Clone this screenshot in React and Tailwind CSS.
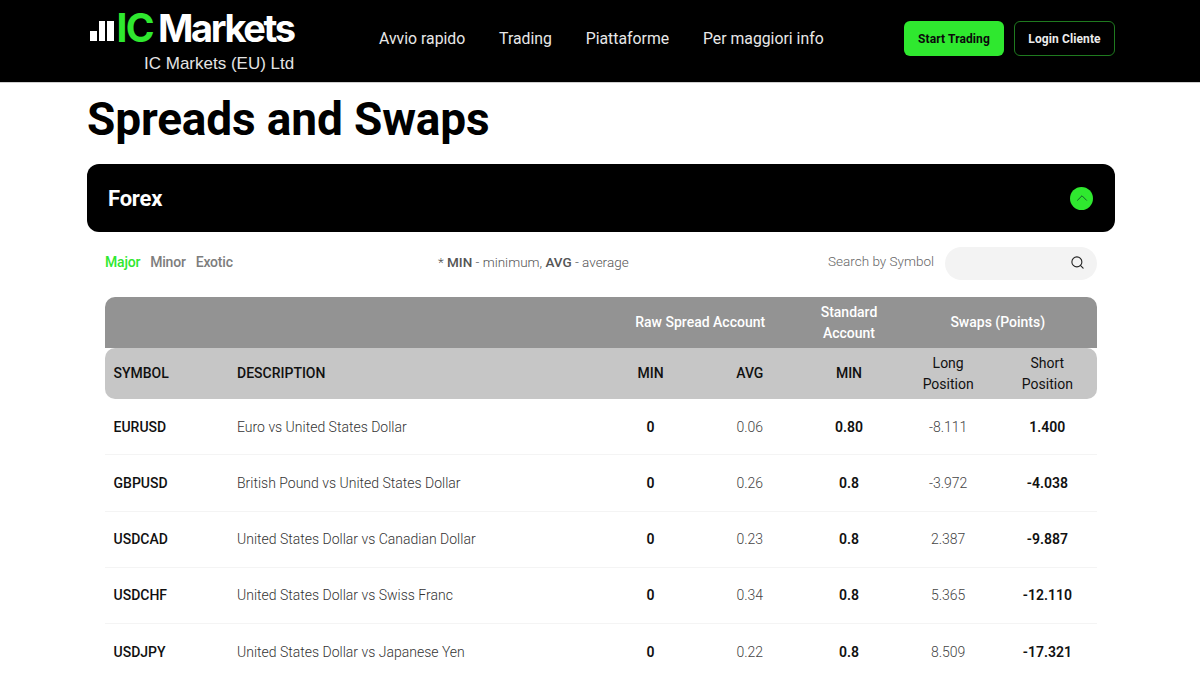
import React from "react";
import { ChevronUp, Search } from "lucide-react";

const navItems = ["Avvio rapido", "Trading", "Piattaforme", "Per maggiori info"];

const rows = [
  ["EURUSD", "Euro vs United States Dollar", "0", "0.06", "0.80", "-8.111", "1.400"],
  ["GBPUSD", "British Pound vs United States Dollar", "0", "0.26", "0.8", "-3.972", "-4.038"],
  ["USDCAD", "United States Dollar vs Canadian Dollar", "0", "0.23", "0.8", "2.387", "-9.887"],
  ["USDCHF", "United States Dollar vs Swiss Franc", "0", "0.34", "0.8", "5.365", "-12.110"],
  ["USDJPY", "United States Dollar vs Japanese Yen", "0", "0.22", "0.8", "8.509", "-17.321"],
];

const gridCols = "grid grid-cols-[132px_364px_repeat(5,99.2px)] items-center";

const Logo = () => (
  <div className="flex flex-col w-[209px] ml-[3px]">
    <div className="flex items-end h-[42px]">
      <div className="flex items-end gap-[2px] mr-[3px] mb-[8px]">
        <span className="w-[6.5px] h-[10px] bg-white" />
        <span className="w-[6.5px] h-[20px] bg-white" />
        <span className="w-[6.5px] h-[20px] bg-white" />
      </div>
      <span className="text-[39px] leading-[42px] font-bold tracking-[-1.6px] text-[#2fe82f] font-['Inter',sans-serif]">IC</span>
      <span className="ml-[5px] text-[38px] leading-[42px] font-bold tracking-[-2.4px] text-white font-['Inter',sans-serif]">Markets</span>
    </div>
    <div className="mt-[4px] pl-[54px] text-[17px] leading-[22px] text-[#e4e4e4] font-['Liberation_Sans',sans-serif]">
      IC Markets (EU) Ltd
    </div>
  </div>
);

const Header = () => (
  <header className="h-[83px] pt-[7px] bg-black border-b border-[#cfcfcf]">
    <div className="ml-[87px] w-[1028px] flex items-start">
      <Logo />
      <nav className="ml-[80px] mt-[20px] flex gap-[33.8px] text-[15.8px] text-[#e8e8e8]">
        {navItems.map((item) => (
          <span key={item}>{item}</span>
        ))}
      </nav>
      <div className="ml-auto mt-[14px] flex gap-[10px] text-[12px] font-bold tracking-[0.1px]">
        <button className="w-[100px] h-[35px] rounded-md bg-[#2fe82f] text-[#0a0a0a]">Start Trading</button>
        <button className="w-[101px] h-[35px] rounded-md border border-[#1f7a1f] text-[#ececec]">Login Cliente</button>
      </div>
    </div>
  </header>
);

const App = () => {
  return (
    <div className="h-[675px] overflow-hidden bg-white font-['Roboto',sans-serif] text-[#111]">
      <Header />
      <main className="ml-[87px] w-[1028px]">
        <h1 className="mt-[8px] h-[56px] text-[46px] leading-[56px] font-bold tracking-[-0.15px] text-black">Spreads and Swaps</h1>
        <div className="mt-[17px] h-[68px] rounded-xl bg-black flex items-center justify-between pl-[21px] pr-[22px]">
          <span className="text-[22px] font-bold tracking-[-0.2px] text-white">Forex</span>
          <span className="w-[23px] h-[23px] rounded-full bg-[#2fe82f] flex items-center justify-center">
            <ChevronUp size={18} strokeWidth={1.25} className="text-[#14532d]" />
          </span>
        </div>

        <div className="mx-[18px]">
          <div className="mt-[15px] h-[32px] flex items-center">
            <div className="w-[333px] mb-[2px] flex gap-[10px] text-[14px] font-medium tracking-[-0.2px] text-[#7d7d7d]">
              <span className="text-[#2fe82f]">Major</span>
              <span>Minor</span>
              <span>Exotic</span>
            </div>
            <div className="mb-[2px] text-[13.5px] font-light text-[#555]">
              * <b className="font-medium">MIN</b> - minimum, <b className="font-medium">AVG</b> - average
            </div>
            <div className="ml-auto flex items-center gap-[11px]">
              <span className="mb-[4px] text-[13.5px] font-light text-[#666]">Search by Symbol</span>
              <div className="w-[152px] h-[33px] rounded-full bg-[#f3f3f3] flex items-center justify-end pr-[12px]">
                <Search size={15} strokeWidth={1.75} className="mb-[2px] text-[#222]" />
              </div>
            </div>
          </div>

          <div className={`${gridCols} mt-[18px] h-[51px] rounded-t-[10px] bg-[#939393] text-[14px] font-medium leading-[21px] text-white text-center`}>
            <span className="col-start-3 col-span-2">Raw Spread Account</span>
            <span>
              Standard
              <br />
              Account
            </span>
            <span className="col-span-2">Swaps (Points)</span>
          </div>
          <div className={`${gridCols} h-[51px] rounded-[10px] bg-[#c6c6c6] text-[14px] font-medium leading-[21px] text-[#111] text-center`}>
            <span className="pl-[8.5px] text-left">SYMBOL</span>
            <span className="text-left">DESCRIPTION</span>
            <span>MIN</span>
            <span>AVG</span>
            <span>MIN</span>
            <span className="font-normal">
              Long
              <br />
              Position
            </span>
            <span className="font-normal">
              Short
              <br />
              Position
            </span>
          </div>

          {rows.map((r) => (
            <div key={r[0]} className={`${gridCols} h-[56.25px] pt-[1px] border-b border-[#f4f4f4] text-[14px] text-center`}>
              <span className="pl-[8.5px] text-left font-medium">{r[0]}</span>
              <span className="text-left font-light text-[#333]">{r[1]}</span>
              <span className="font-semibold">{r[2]}</span>
              <span className="font-light text-[#444]">{r[3]}</span>
              <span className="font-semibold">{r[4]}</span>
              <span className="font-light text-[#444]">{r[5]}</span>
              <span className="font-semibold">{r[6]}</span>
            </div>
          ))}
        </div>
      </main>
    </div>
  );
};

export default App;
